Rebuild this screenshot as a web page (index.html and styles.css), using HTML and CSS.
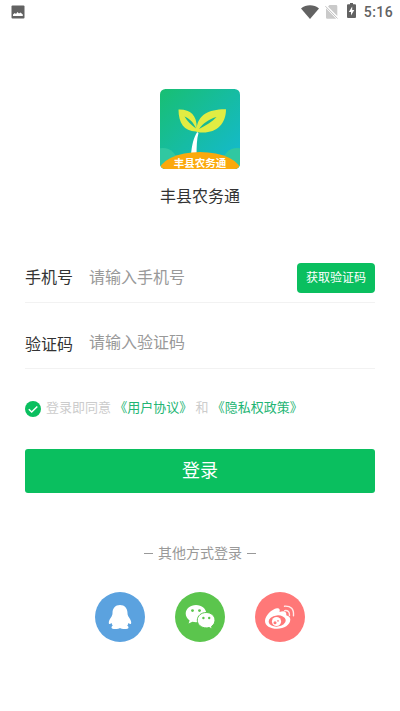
FILE: index.html
```html
<!DOCTYPE html>
<html lang="zh-CN">
<head>
<meta charset="utf-8">
<title>丰县农务通</title>
<link rel="stylesheet" href="styles.css">
</head>
<body>
<header class="status">
  <svg class="status-photo" width="14" height="14" viewBox="0 0 14 14"><rect x=".5" y=".5" width="13" height="13" rx="1" fill="#626262"/><path d="M2 11V9.400L3.800 8 5 9 6.500 7 8 8.600 9.500 7.500 11.800 9.600V11z" fill="#fff"/></svg>
  <div class="status-right">
    <svg width="18" height="14" viewBox="0 0 18 14"><path d="M0 3.400C5-.9 13-.9 18 3.400L9 14z" fill="#626262"/></svg>
    <svg class="sim" width="13" height="14" viewBox="0 0 13 14"><path d="M4.500 0H11q1.300 0 1.300 1.200V11L3 1.500zM1 3.200 11.200 13.700H2.200Q1 13.700 1 12.500z" fill="#cacaca"/><path d="M.4 1.200 12.500 13.500" stroke="#c4c4c4" stroke-width="1"/></svg>
    <svg class="battery" width="9" height="15" viewBox="0 0 9 15"><path d="M3 0h3v1.300h2q1 0 1 1V14q0 1-1 1H1q-1 0-1-1V2.300q0-1 1-1h2z" fill="#626262"/><path d="M5.200 3.500 1.800 9H4v3.500L7.300 7H5.200z" fill="#fff"/></svg>
    <span class="time">5:16</span>
  </div>
</header>
<main class="page">
  <svg class="logo" width="80" height="80" viewBox="0 0 80 80">
    <defs>
      <linearGradient id="bg" x1="0" y1="0" x2="1" y2="1"><stop offset="0" stop-color="#18bf72"/><stop offset="1" stop-color="#14b9d4"/></linearGradient>
      <clipPath id="tile"><rect width="80" height="80" rx="5.500"/></clipPath>
    </defs>
    <g clip-path="url(#tile)">
      <rect width="80" height="80" fill="url(#bg)"/>
      <circle cx="3" cy="73" r="14" fill="#30c8a1"/><circle cx="77" cy="73" r="14" fill="#30c8a1"/>
      <path d="M37.200 43C33.500 49 31.800 56 31 66h5.500c.2-9 .2-16 2-22z" fill="#fff"/>
      <path d="M36 42.500C24 42 18.500 34 18.500 20.500 30 20 37 26 36.800 39 38 26 49 20 66 20.300 66 37 54 46 37 43z" fill="#e1ec43"/>
      <path d="M24.500 27.500C29 29.500 33.500 33 36 39.500 31 36 27.500 32.500 24.500 27.500zM39 40C43 34.500 49 30 56.500 28 52 33 46 36 39 40z" fill="#18b993"/>
      <ellipse cx="40" cy="83" rx="41" ry="20" fill="#fba90c"/>
      <text class="logo-text" x="40" y="77.500" text-anchor="middle">丰县农务通</text>
    </g>
  </svg>
  <h1 class="title">丰县农务通</h1>
  <form class="form">
    <div class="row">
      <label class="label" for="phone">手机号</label>
      <input class="field" id="phone" placeholder="请输入手机号">
      <button class="code" type="button">获取验证码</button>
    </div>
    <div class="row">
      <label class="label label-low" for="sms">验证码</label>
      <input class="field field-high" id="sms" placeholder="请输入验证码">
    </div>
    <div class="agree">
      <svg class="check" width="16" height="16" viewBox="0 0 16 16"><circle cx="8" cy="8" r="8" fill="#0abf5f"/><path d="M3.800 8.300 6.700 11 12.300 5.500" fill="none" stroke="#fff" stroke-width="1.500"/></svg>
      <p class="terms">登录即同意 <a>《用户协议》</a> 和 <a>《隐私权政策》</a></p>
    </div>
    <button class="login" type="button">登录</button>
  </form>
  <div class="other"><i class="dash"></i><span class="other-text">其他方式登录</span><i class="dash"></i></div>
  <nav class="social">
    <svg width="50" height="50" viewBox="0 0 50 50"><circle cx="25" cy="25" r="25" fill="#5ba2df"/><path d="M25 13c-4.700 0-7.500 3.500-7.500 8 0 1.500-.3 2.300-.9 3.400-1.700 2.400-2.800 4.300-2.800 6 0 1.800.7 2.200 2.800.6.200 1.200.6 2 1.200 2.700-.9.400-1.300 1-1.300 1.700 0 1.200 1.500 1.700 4 1.700 2 0 3.400-.3 4.500-1 1.100.7 2.500 1 4.500 1 2.500 0 4-.5 4-1.700 0-.7-.4-1.300-1.300-1.700.6-.7 1-1.500 1.200-2.700 2.100 1.600 2.800 1.200 2.800-.6 0-1.700-1.100-3.600-2.800-6-.6-1.100-.9-1.900-.9-3.400 0-4.500-2.800-8-7.500-8z" fill="#fff"/></svg>
    <svg width="50" height="50" viewBox="0 0 50 50"><circle cx="25" cy="25" r="25" fill="#5bc54d"/><path d="M21 13c-5.800 0-10.300 3.800-10.300 8.600 0 2.800 1.400 5.200 3.900 6.800l-1 3.200 3.800-1.900c1.200.3 2.300.5 3.600.5 5.800 0 10.300-3.800 10.300-8.600S26.800 13 21 13z" fill="#fff"/><path d="M31.200 20.500c-5 0-8.900 3.400-8.900 7.700s3.900 7.700 8.900 7.700c1 0 2-.1 2.900-.4l3.200 1.600-.8-2.700c2.200-1.500 3.500-3.700 3.500-6.200 0-4.300-3.800-7.700-8.800-7.700z" fill="#fff" stroke="#5bc54d" stroke-width="1"/><g fill="#5bc54d"><circle cx="17.500" cy="18.600" r="1.400"/><circle cx="24.500" cy="18.600" r="1.400"/><circle cx="28.400" cy="26" r="1.200"/><circle cx="34.200" cy="26" r="1.200"/></g></svg>
    <svg width="50" height="50" viewBox="0 0 50 50"><circle cx="25" cy="25" r="25" fill="#ff7878"/><path d="M10 29c0-5 6.500-12 12-12.800 2.500-.3 3.200 1.300 2.500 3.800 3.500-1.500 7.500-1.300 6.800 3.200 2.500.8 4 2 4 4.300 0 5.300-6.300 9.300-13.200 9.300S10 33.800 10 29z" fill="#fff"/><ellipse cx="22.200" cy="29" rx="8.600" ry="5.600" fill="#ff7878" transform="rotate(-6 22 29)"/><circle cx="21.500" cy="29.500" r="4.600" fill="#fff"/><circle cx="20" cy="30.800" r="1.500" fill="#ff7878"/><circle cx="23" cy="28.900" r=".8" fill="#ff7878"/><path d="M29.700 18.600q5-.6 4.800 4.900M29.500 14.200Q39.300 13.600 38.500 23.800" fill="none" stroke="#fff" stroke-opacity=".85" stroke-width="1.400" stroke-linecap="round"/></svg>
  </nav>
</main>
</body>
</html>
```
FILE: styles.css
```css
* { box-sizing: border-box; }
body {
  margin: 0;
  background: #fff;
  color: #333;
  font-family: "Noto Sans CJK SC", sans-serif;
}
svg { display: block; flex: none; }
button, input { font-family: inherit; border: 0; padding: 0; margin: 0; }
.status {
  height: 24px;
  padding: 0 7px 0 11px;
  display: flex;
  align-items: center;
  justify-content: space-between;
}
.status-right { display: flex; align-items: center; height: 24px; }
.sim { margin-left: 6px; }
.battery { margin: -3px 0 0 9px; }
.time {
  margin-left: 8px;
  font: 500 14px/24px Roboto, sans-serif;
  letter-spacing: .4px;
  color: #626262;
}
.page { padding: 65px 25px 0; display: flex; flex-direction: column; align-items: center; }
.logo-text { font-size: 10.500px; font-weight: 700; fill: #fff; }
.title { margin: 14px 0 0; font-size: 16px; font-weight: 400; line-height: 24px; }
.form { width: 100%; margin-top: 46px; }
.row {
  height: 50px;
  display: flex;
  align-items: center;
  border-bottom: 1px solid #f2f2f2;
}
.row + .row { margin-top: 16px; }
.label { width: 64px; padding-bottom: 3px; font-size: 16px; line-height: 24px; }
.label-low { padding-bottom: 1px; }
.field {
  flex: 1;
  min-width: 0;
  height: 28px;
  padding-bottom: 4px;
  font-size: 16px;
  outline: 0;
  background: none;
}
.field-high { height: 30px; padding-bottom: 6px; }
.field::placeholder { color: #999; opacity: 1; }
.code {
  width: 78px;
  height: 30px;
  padding-bottom: 2px;
  border-radius: 4px;
  background: #0abf5f;
  color: #fff;
  font-size: 12px;
}
.agree { margin-top: 30px; height: 20px; display: flex; align-items: center; }
.terms {
  margin: 0 0 0 5px;
  padding-bottom: 4px;
  font-size: 13px;
  line-height: 20px;
  word-spacing: .3px;
  color: #ccc;
  white-space: nowrap;
}
.terms a { color: #22b573; }
.login {
  display: block;
  width: 100%;
  height: 44px;
  margin-top: 30px;
  padding-bottom: 5px;
  border-radius: 3px;
  background: #0abf5f;
  color: #fff;
  font-size: 18px;
}
.other {
  height: 20px;
  margin-top: 50px;
  display: flex;
  align-items: center;
  gap: 5px;
  font-size: 14px;
  line-height: 20px;
  color: #999;
}
.other-text { padding-bottom: 2px; }
.dash { width: 9px; height: 1px; background: #999; }
.social { margin-top: 29px; display: flex; gap: 30px; }
```
